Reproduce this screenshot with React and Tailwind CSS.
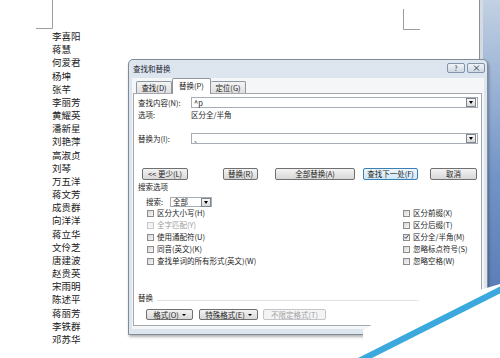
import React from 'react'

const names = [
  '李喜阳', '蒋慧', '何爱君', '杨坤', '张芊', '李丽芳', '黄耀英', '潘新星',
  '刘艳萍', '高淑贞', '刘琴', '万五洋', '蒋文芳', '成贵群', '向洋洋', '蒋立华',
  '文伶芝', '唐建波', '赵贵英', '宋雨明', '陈述平', '蒋丽芳', '李铁群', '邓苏华',
]

function DropBtn() {
  return (
    <span className="flex h-[9px] w-[10px] items-center justify-center border border-[#7c848d] bg-gradient-to-b from-[#f8f8f8] to-[#dadada]">
      <span className="h-0 w-0 border-x-[2.5px] border-t-[3px] border-x-transparent border-t-black" />
    </span>
  )
}

function Field({ value }) {
  return (
    <div className="flex h-[11px] w-[287px] items-center justify-between border border-[#a6adb5] bg-white pl-[2px] pr-[1px]">
      <span className="leading-none">{value}</span>
      <DropBtn />
    </div>
  )
}

function Btn({ className, children, primary, disabled }) {
  let look = 'border-[#707070] bg-gradient-to-b from-[#f3f3f3] to-[#d8d8d8]'
  if (primary) look = 'border-[#3c7fb1] bg-gradient-to-b from-[#eef7fd] to-[#cfe8f8]'
  if (disabled) look = 'border-[#c3c7cb] bg-[#f4f4f4] text-[#a3a3a3]'
  return (
    <div className={`flex h-full items-center justify-center rounded-[2px] border leading-none ${look} ${className}`}>
      {children}
    </div>
  )
}

function Check({ label, checked, disabled }) {
  return (
    <div className="flex h-[12px] items-center">
      <span
        className={`flex h-[7px] w-[7px] items-center justify-center border ${
          disabled ? 'border-[#c8c8c8] bg-[#f3f3f3]' : 'border-[#8c8c8c] bg-gradient-to-br from-[#d6d6d6] to-[#f8f8f8]'
        }`}
      >
        {checked && (
          <svg width="6" height="6" viewBox="0 0 6 6">
            <path d="M0.8 3.1 L2.3 4.7 L5.3 0.9" fill="none" stroke="#2a3b5a" strokeWidth="1.1" />
          </svg>
        )}
      </span>
      <span className={`ml-[3px] leading-none ${disabled ? 'text-[#9c9c9c]' : ''}`}>{label}</span>
    </div>
  )
}

function TitleBtn({ children }) {
  return (
    <div className="flex h-[10px] w-[18px] items-center justify-center rounded-[2px] border border-[#8194aa] bg-gradient-to-b from-[#f0f4f8] to-[#cdd8e4] text-[7px] leading-none text-[#3a4656]">
      {children}
    </div>
  )
}

function Dialog() {
  return (
    <div className="absolute left-[128px] top-[59px] flex h-[276px] w-[360px] flex-col rounded-t-[5px] border border-[#7f8b98] bg-[#dde5ee] text-[7.5px] text-[#1d1d1d] shadow-[1px_2px_3px_rgba(0,0,0,0.3)]">
      <div className="flex h-[18px] shrink-0 items-start justify-between pl-[4px] pr-[2px]">
        <span className="mt-[5px] leading-none text-[#1c2733]">查找和替换</span>
        <div className="mt-[3px] flex gap-[2px]">
          <TitleBtn>?</TitleBtn>
          <TitleBtn>
            <svg width="7" height="6" viewBox="0 0 7 6">
              <path d="M1 0.5 L6 5.5 M6 0.5 L1 5.5" stroke="#3a4656" strokeWidth="1" />
            </svg>
          </TitleBtn>
        </div>
      </div>

      <div className="mx-[3px] flex h-[251px] flex-col bg-[#f5f6f7]">
        <div className="flex h-[15px] shrink-0 items-end pl-[4px]">
          <div className="flex h-[12px] w-[36px] items-center justify-center rounded-t-[2px] border border-b-0 border-[#8e969f] bg-gradient-to-b from-[#f4f4f4] to-[#dfdfdf] leading-none">
            查找(D)
          </div>
          <div className="relative z-10 -mb-[1px] flex h-[16px] w-[39px] items-center justify-center rounded-t-[2px] border border-b-0 border-[#8e969f] bg-white pb-[2px] leading-none">
            替换(P)
          </div>
          <div className="flex h-[12px] w-[35px] items-center justify-center rounded-t-[2px] border border-b-0 border-l-0 border-[#8e969f] bg-gradient-to-b from-[#f4f4f4] to-[#dfdfdf] leading-none">
            定位(G)
          </div>
        </div>

        <div className="ml-[1px] mr-[2px] flex h-[233px] flex-col border border-[#a3a8ae] bg-white">
          <div className="mt-[3px] flex h-[11px] items-center">
            <span className="w-[57px] pl-[4px] leading-none">查找内容(N):</span>
            <Field value="^p" />
          </div>
          <div className="mt-[1px] flex h-[12px] items-center">
            <span className="w-[57px] pl-[4px] leading-none">选项:</span>
            <span className="leading-none">区分全/半角</span>
          </div>
          <div className="mt-[12px] flex h-[11px] items-center">
            <span className="w-[57px] pl-[4px] leading-none">替换为(I):</span>
            <Field value="、" />
          </div>

          <div className="mt-[24px] flex h-[12px]">
            <Btn className="ml-[8px] w-[46px]">&lt;&lt; 更少(L)</Btn>
            <Btn className="ml-[35px] w-[35px]">替换(R)</Btn>
            <Btn className="ml-[17px] w-[80px]">全部替换(A)</Btn>
            <Btn className="ml-[8px] w-[55px]" primary>查找下一处(F)</Btn>
            <Btn className="ml-[12px] w-[47px]">取消</Btn>
          </div>

          <div className="mt-[1px] flex h-[12px] items-center pl-[4px] leading-none">搜索选项</div>

          <div className="mt-[4px] flex h-[10px] items-center pl-[12px]">
            <span className="w-[24px] leading-none">搜索:</span>
            <div className="flex h-[10px] w-[42px] items-center justify-between border border-[#a6adb5] bg-white pl-[2px]">
              <span className="leading-none">全部</span>
              <DropBtn />
            </div>
          </div>

          <div className="grid grid-cols-[256px_1fr] pl-[13px]">
            <div className="flex flex-col">
              <Check label="区分大小写(H)" />
              <Check label="全字匹配(Y)" disabled />
              <Check label="使用通配符(U)" />
              <Check label="同音(英文)(K)" />
              <Check label="查找单词的所有形式(英文)(W)" />
            </div>
            <div className="flex flex-col">
              <Check label="区分前缀(X)" />
              <Check label="区分后缀(T)" />
              <Check label="区分全/半角(M)" checked />
              <Check label="忽略标点符号(S)" />
              <Check label="忽略空格(W)" />
            </div>
          </div>

          <div className="mt-[25px] flex h-[12px] items-center pl-[4px]">
            <span className="leading-none">替换</span>
            <span className="ml-[4px] mr-[3px] mt-[4px] h-px flex-1 bg-[#dde2e7]" />
          </div>

          <div className="mt-[5px] flex h-[11px]">
            <Btn className="ml-[12px] w-[47px]">
              格式(O)
              <span className="ml-[3px] h-0 w-0 border-x-[2px] border-t-[2.5px] border-x-transparent border-t-black" />
            </Btn>
            <Btn className="ml-[6px] w-[59px]">
              特殊格式(E)
              <span className="ml-[3px] h-0 w-0 border-x-[2px] border-t-[2.5px] border-x-transparent border-t-black" />
            </Btn>
            <Btn className="ml-[5px] w-[63px]" disabled>不限定格式(T)</Btn>
          </div>
        </div>
      </div>
    </div>
  )
}

export default function App() {
  return (
    <div className="relative h-[358px] w-[500px] overflow-hidden bg-white font-['Noto_Sans_CJK_SC',sans-serif]">
      <div className="flex h-full">
        <div className="w-[479px] pl-[52px] pt-[30px] text-[9.5px] leading-[13.17px] text-[#222]">
          {names.map((n) => (
            <div key={n}>{n}</div>
          ))}
        </div>
        <div className="w-px bg-[#8e8e8e]" />
        <div className="w-[3px] bg-[#d5dbe3]" />
        <div className="flex-1 bg-gradient-to-b from-[#c2d1e3] via-[#7193c5] to-[#4d71af]" />
      </div>

      {/* page corner marks */}
      <svg className="absolute left-0 top-0" width="500" height="40">
        <path d="M52.5 0 V28.5 H36" fill="none" stroke="#9c9c9c" strokeWidth="1" />
        <path d="M403.5 9 V29.5 H420" fill="none" stroke="#9c9c9c" strokeWidth="1" />
      </svg>

      <Dialog />

      {/* watermark corner */}
      <svg className="pointer-events-none absolute left-0 top-0" width="500" height="358">
        <polygon points="363,358 363,330 410,302 483,289 500,284 500,358" fill="#ffffff" />
        <polygon points="358,358 500,286.5 500,293.5 372,358" fill="#3ba9dd" />
      </svg>
    </div>
  )
}
